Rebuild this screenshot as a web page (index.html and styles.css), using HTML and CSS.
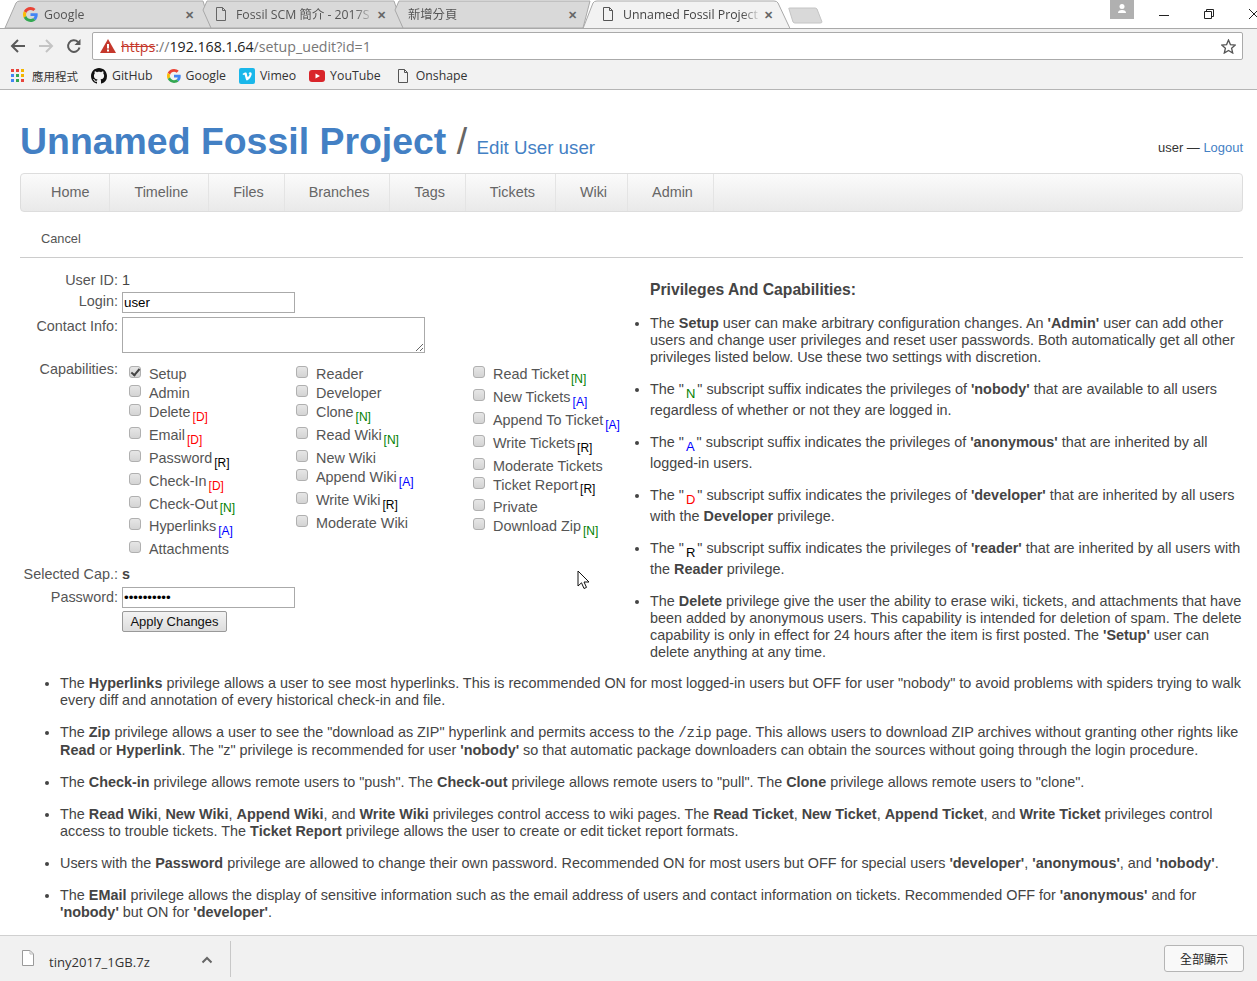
FILE: index.html

```html
<!DOCTYPE html>
<html lang="en">
<head>
    <meta charset="UTF-8">
    <title>Unnamed Fossil Project: Edit User user</title>
    <link rel="stylesheet" href="styles.css">
</head>
<body>
    <div class="browser-top">
        <div class="tab-strip">
            <svg class="tab-shapes" width="1100" height="29" viewBox="0 0 1100 29">
                <path d="M5 28 L16 3 Q17 1 20 1 H203 L211 28 Z" fill="#d9d9d9" stroke="#a9a9a9"/>
                <path d="M211 28 L203 10 L207 1 H394 L403 28 Z" fill="#d9d9d9" stroke="#a9a9a9"/>
                <path d="M403 28 L395 10 L399 1 H590 L583 28 Z" fill="#d9d9d9" stroke="#a9a9a9"/>
                <path d="M583 28.5 L593 3 Q594 1 597 1 H774 Q777 1 778 3 L790 28.5 Z" fill="#f2f2f2" stroke="#a9a9a9"/>
                <path d="M789 9 Q788 8 790 8 H815 Q816 8 817 9 L822 22 Q822 23 820 23 H795 Q794 23 793 22 Z" fill="#d9d9d9" stroke="#c4c4c4"/>
            </svg>
            <div class="tab tab-first">
                <svg class="tab-icon" width="15" height="15" viewBox="0 0 48 48">
                    <path fill="#ea4335" d="M24 9.500c3.500 0 6.700 1.200 9.200 3.600l6.900-6.900C35.900 2.400 30.500 0 24 0 14.600 0 6.500 5.400 2.600 13.200l8 6.200C12.500 13.700 17.800 9.500 24 9.500z"/>
                    <path fill="#4285f4" d="M47 24.500c0-1.600-.1-3.100-.4-4.500H24v9h12.900c-.6 3-2.200 5.400-4.700 7.100l7.700 6c4.500-4.200 7.100-10.300 7.100-17.600z"/>
                    <path fill="#fbbc05" d="M10.600 28.600c-.5-1.400-.8-3-.8-4.600s.3-3.200.8-4.600l-8-6.200C.9 16.500 0 20.100 0 24s.9 7.500 2.600 10.800l8-6.200z"/>
                    <path fill="#34a853" d="M24 48c6.500 0 11.900-2.100 15.900-5.900l-7.700-6c-2.200 1.400-4.900 2.300-8.200 2.300-6.200 0-11.500-4.200-13.400-9.900l-8 6.200C6.500 42.600 14.600 48 24 48z"/>
                </svg>
                <span class="tab-title">Google</span>
                <span class="tab-close">✕</span>
            </div>
            <div class="tab tab-second">
                <svg class="tab-icon" width="16" height="16" viewBox="0 0 16 16"><path d="M3.500 1.500H9.500L12.500 4.500V14.500H3.500Z M9.500 1.500V4.500H12.500" fill="none" stroke="#666"/></svg>
                <span class="tab-title">Fossil SCM 簡介 - 2017S</span>
                <span class="tab-close">✕</span>
            </div>
            <div class="tab tab-third">
                <span class="tab-title">新增分頁</span>
                <span class="tab-close">✕</span>
            </div>
            <div class="tab tab-active">
                <svg class="tab-icon" width="16" height="16" viewBox="0 0 16 16"><path d="M3.500 1.500H9.500L12.500 4.500V14.500H3.500Z M9.500 1.500V4.500H12.500" fill="none" stroke="#555"/></svg>
                <span class="tab-title">Unnamed Fossil Project</span>
                <span class="tab-close">✕</span>
            </div>
            <div class="window-controls">
                <div class="avatar">
                    <svg width="24" height="19" viewBox="0 0 24 19"><circle cx="12" cy="6.500" r="2.500" fill="#fff"/><path d="M8 13 Q8 10 12 10 Q16 10 16 13 Z" fill="#fff"/></svg>
                </div>
                <svg class="win-min" width="10" height="10" viewBox="0 0 10 10"><path d="M0 5.500H10" stroke="#222"/></svg>
                <svg class="win-max" width="10" height="10" viewBox="0 0 10 10"><path d="M.5 2.500H7.500V9.500H.5Z M2.500 2.500V.5H9.500V7.500H7.500" fill="none" stroke="#222"/></svg>
                <svg class="win-close" width="10" height="10" viewBox="0 0 10 10"><path d="M0 0L10 10M10 0L0 10" stroke="#222"/></svg>
            </div>
        </div>
        <div class="toolbar">
            <svg class="nav-btn" width="16" height="16" viewBox="0 0 16 16"><path d="M15 8H2M8 2L2 8L8 14" fill="none" stroke="#5a5a5a" stroke-width="2"/></svg>
            <svg class="nav-btn" width="16" height="16" viewBox="0 0 16 16"><path d="M1 8H14M8 2L14 8L8 14" fill="none" stroke="#c4c4c4" stroke-width="2"/></svg>
            <svg class="nav-btn" width="16" height="16" viewBox="0 0 16 16"><path d="M13.500 9.500A5.800 5.800 0 1 1 12 4" fill="none" stroke="#5a5a5a" stroke-width="2"/><path d="M14.500 1V7H8.500Z" fill="#5a5a5a"/></svg>
            <div class="omnibox">
                <svg class="warn-icon" width="16" height="14" viewBox="0 0 16 14"><path d="M8 0L16 14H0Z" fill="#c5382c"/><path d="M7 5H9V9.500H7ZM7 10.500H9V12.500H7Z" fill="#fff"/></svg>
                <span class="url"><span class="url-scheme">https</span><span class="url-slash">://</span><span class="url-host">192.168.1.64</span><span class="url-path">/setup_uedit?id=1</span></span>
                <svg class="star" width="15" height="15" viewBox="0 0 15 15"><path d="M7.500 1L9.400 5.600L14.300 6L10.600 9.200L11.700 14L7.500 11.400L3.300 14L4.400 9.200L.7 6L5.600 5.600Z" fill="none" stroke="#555" stroke-width="1.300"/></svg>
            </div>
        </div>
        <div class="bookmarks">
            <span class="bookmark bookmark-apps">
                <svg width="14" height="14" viewBox="0 0 14 14">
                    <rect x="0" y="0" width="3" height="3" fill="#e8453c"/><rect x="5" y="0" width="3" height="3" fill="#e8453c"/><rect x="10" y="0" width="3" height="3" fill="#f4b400"/>
                    <rect x="0" y="5" width="3" height="3" fill="#4285f4"/><rect x="5" y="5" width="3" height="3" fill="#34a853"/><rect x="10" y="5" width="3" height="3" fill="#f4b400"/>
                    <rect x="0" y="10" width="3" height="3" fill="#4285f4"/><rect x="5" y="10" width="3" height="3" fill="#34a853"/><rect x="10" y="10" width="3" height="3" fill="#e8453c"/>
                </svg>
                <span class="cjk">應用程式</span>
            </span>
            <span class="bookmark">
                <svg width="16" height="16" viewBox="0 0 16 16"><path fill="#111" d="M8 0C3.580 0 0 3.580 0 8c0 3.540 2.290 6.530 5.470 7.590.4.070.55-.17.55-.38 0-.19-.01-.82-.01-1.490-2.010.37-2.530-.49-2.690-.94-.09-.23-.48-.94-.82-1.130-.28-.15-.68-.52-.01-.53.630-.01 1.080.58 1.230.82.720 1.210 1.870.870 2.330.660.070-.520.280-.870.510-1.070-1.780-.2-3.640-.89-3.640-3.950 0-.870.310-1.590.820-2.150-.08-.2-.36-1.020.08-2.120 0 0 .67-.21 2.200.820.640-.18 1.320-.27 2-.27s1.360.09 2 .27c1.530-1.040 2.200-.82 2.200-.82.440 1.100.160 1.920.080 2.120.510.560.820 1.270.820 2.150 0 3.070-1.870 3.750-3.650 3.950.290.250.540.730.540 1.480 0 1.070-.01 1.930-.01 2.200 0 .21.150.460.550.380A8.010 8.010 0 0 0 16 8c0-4.420-3.580-8-8-8z"/></svg>
                GitHub
            </span>
            <span class="bookmark bookmark-google">
                <svg width="14" height="14" viewBox="0 0 48 48">
                    <path fill="#ea4335" d="M24 9.500c3.500 0 6.700 1.200 9.200 3.600l6.900-6.900C35.900 2.400 30.500 0 24 0 14.600 0 6.500 5.400 2.600 13.200l8 6.200C12.500 13.700 17.800 9.500 24 9.500z"/>
                    <path fill="#4285f4" d="M47 24.500c0-1.600-.1-3.100-.4-4.500H24v9h12.900c-.6 3-2.200 5.400-4.700 7.100l7.700 6c4.500-4.200 7.100-10.300 7.100-17.600z"/>
                    <path fill="#fbbc05" d="M10.600 28.600c-.5-1.400-.8-3-.8-4.600s.3-3.200.8-4.600l-8-6.200C.9 16.500 0 20.100 0 24s.9 7.500 2.600 10.800l8-6.200z"/>
                    <path fill="#34a853" d="M24 48c6.500 0 11.900-2.100 15.900-5.900l-7.700-6c-2.200 1.400-4.900 2.300-8.200 2.300-6.200 0-11.500-4.200-13.400-9.900l-8 6.200C6.500 42.600 14.600 48 24 48z"/>
                </svg>
                Google
            </span>
            <span class="bookmark">
                <svg width="16" height="16" viewBox="0 0 16 16"><rect width="16" height="16" rx="2" fill="#1ab7ea"/><path d="M3.500 6L4.200 6.900C5 6.300 5.400 6.200 5.700 7L6.900 11.300C7.400 12.600 8 12.800 8.900 12.100C10.800 10.700 12.400 8.300 12.700 6.200C13 4 10.500 3.200 9.200 5.800C10.300 5.100 10.900 6 10.300 7.200C9.700 8.300 9.200 8.900 8.900 8.900C8.500 8.900 8.300 7.800 8 6.400C7.600 4.200 6.800 3.800 3.500 6Z" fill="#fff"/></svg>
                Vimeo
            </span>
            <span class="bookmark">
                <svg width="16" height="16" viewBox="0 0 16 16"><rect y="2" width="16" height="12" rx="3" fill="#d9252a"/><path d="M6.500 5.500L11 8L6.500 10.500Z" fill="#fff"/></svg>
                YouTube
            </span>
            <span class="bookmark bookmark-last">
                <svg width="14" height="16" viewBox="0 0 14 16"><path d="M2.500 1.500H8.500L11.500 4.500V14.500H2.500Z M8.500 1.500V4.500H11.500" fill="none" stroke="#555"/></svg>
                Onshape
            </span>
        </div>
    </div>

    <div class="page">
        <div class="header">
            <div class="title">Unnamed Fossil Project <span class="title-slash">/</span> <span class="subtitle">Edit User user</span></div>
            <div class="login-status">user — <a href="#">Logout</a></div>
        </div>
        <div class="mainmenu">
            <a href="#">Home</a>
            <a href="#">Timeline</a>
            <a href="#">Files</a>
            <a href="#">Branches</a>
            <a href="#">Tags</a>
            <a href="#">Tickets</a>
            <a href="#">Wiki</a>
            <a href="#">Admin</a>
        </div>
        <div class="submenu"><a href="#">Cancel</a></div>

        <div class="content">
            <form class="edit-form">
                <table class="form-table">
                    <tr class="row-id">
                        <td class="form-label">User ID:</td>
                        <td>1</td>
                    </tr>
                    <tr class="row-login">
                        <td class="form-label">Login:</td>
                        <td><input type="text" class="text-input" value="user"></td>
                    </tr>
                    <tr class="row-info">
                        <td class="form-label">Contact Info:</td>
                        <td><textarea class="info-input"></textarea></td>
                    </tr>
                    <tr class="row-caps">
                        <td class="form-label">Capabilities:</td>
                        <td>
                            <table class="caps-table">
                                <tr>
                                    <td class="caps-col-1">
                                        <label><input type="checkbox" checked>Setup</label><br>
                                        <label><input type="checkbox">Admin</label><br>
                                        <label><input type="checkbox">Delete<sub class="inherit-dev">[D]</sub></label><br>
                                        <label><input type="checkbox">Email<sub class="inherit-dev">[D]</sub></label><br>
                                        <label><input type="checkbox">Password<sub class="inherit-reader">[R]</sub></label><br>
                                        <label><input type="checkbox">Check-In<sub class="inherit-dev">[D]</sub></label><br>
                                        <label><input type="checkbox">Check-Out<sub class="inherit-nobody">[N]</sub></label><br>
                                        <label><input type="checkbox">Hyperlinks<sub class="inherit-anon">[A]</sub></label><br>
                                        <label><input type="checkbox">Attachments</label>
                                    </td>
                                    <td class="caps-col-2">
                                        <label><input type="checkbox">Reader</label><br>
                                        <label><input type="checkbox">Developer</label><br>
                                        <label><input type="checkbox">Clone<sub class="inherit-nobody">[N]</sub></label><br>
                                        <label><input type="checkbox">Read Wiki<sub class="inherit-nobody">[N]</sub></label><br>
                                        <label><input type="checkbox">New Wiki</label><br>
                                        <label><input type="checkbox">Append Wiki<sub class="inherit-anon">[A]</sub></label><br>
                                        <label><input type="checkbox">Write Wiki<sub class="inherit-reader">[R]</sub></label><br>
                                        <label><input type="checkbox">Moderate Wiki</label>
                                    </td>
                                    <td class="caps-col-3">
                                        <label><input type="checkbox">Read Ticket<sub class="inherit-nobody">[N]</sub></label><br>
                                        <label><input type="checkbox">New Tickets<sub class="inherit-anon">[A]</sub></label><br>
                                        <label><input type="checkbox">Append To Ticket<sub class="inherit-anon">[A]</sub></label><br>
                                        <label><input type="checkbox">Write Tickets<sub class="inherit-reader">[R]</sub></label><br>
                                        <label><input type="checkbox">Moderate Tickets</label><br>
                                        <label><input type="checkbox">Ticket Report<sub class="inherit-reader">[R]</sub></label><br>
                                        <label><input type="checkbox">Private</label><br>
                                        <label><input type="checkbox">Download Zip<sub class="inherit-nobody">[N]</sub></label>
                                    </td>
                                </tr>
                            </table>
                        </td>
                    </tr>
                    <tr class="row-selected">
                        <td class="form-label">Selected Cap.:</td>
                        <td><b>s</b></td>
                    </tr>
                    <tr class="row-password">
                        <td class="form-label">Password:</td>
                        <td><input type="password" class="text-input" value="**********"></td>
                    </tr>
                    <tr>
                        <td></td>
                        <td><input type="button" class="apply-btn" value="Apply Changes"></td>
                    </tr>
                </table>
            </form>

            <h2 class="help-title">Privileges And Capabilities:</h2>
            <ul class="help-list">
                <li>The <b>Setup</b> user can make arbitrary configuration changes. An <b>'Admin'</b> user can add other users and change user privileges and reset user passwords. Both automatically get all other privileges listed below. Use these two settings with discretion.</li>
                <li>The "<sub class="legend inherit-nobody">N</sub>" subscript suffix indicates the privileges of <b>'nobody'</b> that are available to all users regardless of whether or not they are logged in.</li>
                <li>The "<sub class="legend inherit-anon">A</sub>" subscript suffix indicates the privileges of <b>'anonymous'</b> that are inherited by all logged-in users.</li>
                <li>The "<sub class="legend inherit-dev">D</sub>" subscript suffix indicates the privileges of <b>'developer'</b> that are inherited by all users with the <b>Developer</b> privilege.</li>
                <li>The "<sub class="legend inherit-reader">R</sub>" subscript suffix indicates the privileges of <b>'reader'</b> that are inherited by all users with the <b>Reader</b> privilege.</li>
                <li class="item-delete">The <b>Delete</b> privilege give the user the ability to erase wiki, tickets, and attachments that have been added by anonymous users. This capability is intended for deletion of spam. The delete capability is only in effect for 24 hours after the item is first posted. The <b>'Setup'</b> user can delete anything at any time.</li>
                <li>The <b>Hyperlinks</b> privilege allows a user to see most hyperlinks. This is recommended ON for most logged-in users but OFF for user "nobody" to avoid problems with spiders trying to walk every diff and annotation of every historical check-in and file.</li>
                <li>The <b>Zip</b> privilege allows a user to see the "download as ZIP" hyperlink and permits access to the <tt>/zip</tt> page. This allows users to download ZIP archives without granting other rights like <b>Read</b> or <b>Hyperlink</b>. The "z" privilege is recommended for user <b>'nobody'</b> so that automatic package downloaders can obtain the sources without going through the login procedure.</li>
                <li>The <b>Check-in</b> privilege allows remote users to "push". The <b>Check-out</b> privilege allows remote users to "pull". The <b>Clone</b> privilege allows remote users to "clone".</li>
                <li>The <b>Read Wiki</b>, <b>New Wiki</b>, <b>Append Wiki</b>, and <b>Write Wiki</b> privileges control access to wiki pages. The <b>Read Ticket</b>, <b>New Ticket</b>, <b>Append Ticket</b>, and <b>Write Ticket</b> privileges control access to trouble tickets. The <b>Ticket Report</b> privilege allows the user to create or edit ticket report formats.</li>
                <li>Users with the <b>Password</b> privilege are allowed to change their own password. Recommended ON for most users but OFF for special users <b>'developer'</b>, <b>'anonymous'</b>, and <b>'nobody'</b>.</li>
                <li>The <b>EMail</b> privilege allows the display of sensitive information such as the email address of users and contact information on tickets. Recommended OFF for <b>'anonymous'</b> and for <b>'nobody'</b> but ON for <b>'developer'</b>.</li>
            </ul>
        </div>
    </div>

    <div class="download-bar">
        <div class="download-item">
            <svg class="file-icon" width="14" height="18" viewBox="0 0 14 18"><path d="M1.500 1.500H9L12.500 5V16.500H1.500Z" fill="#fff" stroke="#9a9a9a"/><path d="M9 1.500V5H12.500" fill="none" stroke="#bbb"/></svg>
            <span class="file-name">tiny2017_1GB.7z</span>
            <svg class="caret" width="12" height="8" viewBox="0 0 12 8"><path d="M1.500 6.500L6 2L10.500 6.500" fill="none" stroke="#666" stroke-width="2"/></svg>
        </div>
        <button class="show-all" type="button">全部顯示</button>
    </div>

    <svg class="cursor" width="14" height="21" viewBox="0 0 14 21"><path d="M1 1V16L4.500 12.800L7 18.500L9.500 17.400L7 12H12Z" fill="#fff" stroke="#111"/></svg>
</body>
</html>
```

FILE: styles.css

```css
html, body {
    margin: 0;
    height: 981px;
    overflow: hidden;
}

body {
    position: relative;
    display: flex;
    flex-direction: column;
    background: #fff;
    font-family: "Liberation Sans", Arial, sans-serif;
    font-size: 14.4px;
    color: #444;
}

/* browser chrome */
.browser-top {
    flex: none;
    font-family: "Open Sans", "Noto Sans CJK TC", sans-serif;
    font-size: 12.3px;
    color: #333;
}

.tab-strip {
    position: relative;
    display: flex;
    height: 28px;
    border-bottom: 1px solid #a9a9a9;
}

.tab-shapes {
    position: absolute;
    left: 0;
    top: 0;
}

.tab {
    position: relative;
    display: flex;
    align-items: center;
    height: 28px;
    color: #555;
}

.tab-first { width: 172px; margin-left: 23px; }
.tab-second { width: 174px; margin-left: 18px; }
.tab-third { width: 170px; margin-left: 21px; }
.tab-active { width: 174px; margin-left: 22px; color: #444; }

.tab-icon {
    flex: none;
    margin-right: 7px;
}

.tab-first .tab-icon {
    margin-right: 6px;
}

.tab-title {
    flex: 1;
    overflow: hidden;
    white-space: nowrap;
    -webkit-mask-image: linear-gradient(to right, #000 85%, transparent);
    mask-image: linear-gradient(to right, #000 85%, transparent);
}

.tab-close {
    flex: none;
    width: 12px;
    font-size: 11px;
    font-weight: bold;
    color: #666;
    text-align: center;
}

.window-controls {
    position: absolute;
    right: 0;
    top: 0;
    display: flex;
    align-items: flex-start;
}

.avatar {
    width: 24px;
    height: 19px;
    background: #b0b0b0;
}

.win-min { margin: 10px 0 0 25px; }
.win-max { margin: 9px 0 0 35px; }
.win-close { margin: 9px -2px 0 35px; }

.toolbar {
    display: flex;
    align-items: center;
    height: 33px;
    background: #f2f2f2;
    padding: 0 14px 0 10px;
}

.nav-btn {
    flex: none;
    margin-right: 12px;
}

.omnibox {
    display: flex;
    align-items: center;
    flex: 1;
    height: 26px;
    margin: 1px 0 0 -2px;
    padding: 0 6px 0 7px;
    background: #fff;
    border: 1px solid #aaa;
    border-radius: 2px;
    font-size: 14.2px;
}

.warn-icon {
    flex: none;
    margin-right: 5px;
}

.url {
    flex: 1;
    white-space: nowrap;
}

.url-scheme {
    color: #c5382c;
    text-decoration: line-through;
}

.url-slash,
.url-path {
    color: #777;
}

.url-host {
    color: #222;
}

.bookmarks {
    display: flex;
    align-items: center;
    gap: 13px;
    height: 27px;
    padding: 0 0 0 11px;
    background: #f2f2f2;
    border-bottom: 1px solid #b5b5b5;
    white-space: nowrap;
}

.bookmark {
    display: flex;
    align-items: center;
    gap: 5px;
}

.bookmark-apps {
    gap: 7px;
}

.bookmark-google {
    margin-left: 1px;
}

.bookmark-last {
    margin-left: 2px;
    gap: 6px;
}

.cjk {
    font-family: "Noto Sans CJK TC", sans-serif;
    font-size: 11.5px;
}

/* page */
.page {
    flex: 1;
    min-height: 0;
    overflow: hidden;
    padding: 0 14px 0 20px;
}

.header {
    display: flex;
    justify-content: space-between;
    align-items: flex-end;
    height: 80px;
    margin-bottom: 3px;
}

.title {
    font-size: 37.44px;
    font-weight: bold;
    line-height: 44px;
    color: #4380c4;
    white-space: nowrap;
}

.title-slash {
    font-weight: normal;
    color: #666;
}

.subtitle {
    margin-left: -1px;
    font-size: 18.72px;
    font-weight: normal;
    color: #4380c4;
}

.login-status {
    padding-bottom: 15px;
    font-size: 12.96px;
    color: #333;
}

.login-status a {
    color: #4380c4;
    text-decoration: none;
}

.mainmenu {
    display: flex;
    height: 37px;
    padding-left: 6px;
    background: linear-gradient(#fbfbfb, #e9e9e9);
    border: 1px solid #ddd;
    border-radius: 4px;
}

.mainmenu a {
    padding: 0 20px 0 24px;
    border-right: 1px solid #e4e4e4;
    line-height: 37px;
    color: #666;
    text-decoration: none;
}

.submenu {
    height: 45px;
    border-bottom: 1px solid #ccc;
    font-size: 12.8px;
    line-height: 54px;
    padding-left: 21px;
}

.submenu a {
    color: #555;
    text-decoration: none;
}

.content {
    padding-top: 13px;
}

.edit-form {
    float: left;
    width: 630px;
    padding-bottom: 29px;
}

.form-table,
.caps-table {
    border-collapse: collapse;
}

.form-table td {
    padding: 0;
    vertical-align: top;
}

.form-table .form-label {
    width: 98px;
    padding-right: 4px;
    text-align: right;
    white-space: nowrap;
    color: #555;
}

.row-id td { height: 21px; line-height: 19px; }
.row-login td { height: 25px; line-height: 19px; }
.row-info td { height: 43px; line-height: 19px; }
.row-caps .form-label { line-height: 19px; }
.row-selected td { height: 23px; line-height: 21px; }
.row-password td { height: 24px; line-height: 21px; }

.text-input {
    display: block;
    box-sizing: border-box;
    width: 173px;
    height: 21px;
    margin: 0;
    padding: 1px;
    border: 1px solid #aaa;
    font-family: "Liberation Sans", Arial, sans-serif;
    font-size: 13.33px;
    color: #000;
}

.info-input {
    display: block;
    box-sizing: border-box;
    width: 303px;
    height: 36px;
    margin: 0;
    border: 1px solid #aaa;
}

.caps-table {
    margin: 5px 0 5px;
}

.caps-table td {
    padding: 0;
    line-height: 19px;
    white-space: nowrap;
}

.form-table .caps-col-1 { width: 167px; }
.form-table .caps-col-2 { width: 177px; }

.caps-table label {
    color: #555;
}

.caps-table input {
    appearance: none;
    position: relative;
    box-sizing: border-box;
    width: 12px;
    height: 12px;
    margin: 0 8px 0 7px;
    vertical-align: 1px;
    background: linear-gradient(#e6e6e6, #d4d4d4);
    border: 1px solid #b0b0b0;
    border-radius: 3px;
}

.caps-table input:checked::after {
    content: "";
    position: absolute;
    left: 3px;
    top: 0;
    width: 3px;
    height: 7px;
    border: solid #444;
    border-width: 0 2px 2px 0;
    transform: rotate(40deg);
}

sub {
    margin-left: 2px;
    font-size: 12px;
    line-height: 17px;
}

sub.legend {
    margin: 0 2px;
    font-size: 13px;
    line-height: 16px;
}

.inherit-nobody { color: #008000; }
.inherit-anon { color: #0000ff; }
.inherit-dev { color: #ff0000; }
.inherit-reader { color: #000; }

.apply-btn {
    box-sizing: border-box;
    width: 105px;
    height: 21px;
    padding: 0;
    background: linear-gradient(#f3f3f3, #dcdcdc);
    border: 1px solid #999;
    border-radius: 2px;
    font-family: "Liberation Sans", Arial, sans-serif;
    font-size: 13px;
    color: #111;
}

.help-title {
    margin: 0;
    padding-top: 10px;
    font-size: 15.7px;
    line-height: 18px;
}

.help-list {
    margin: 16px 0 0;
    padding-left: 40px;
    line-height: 17px;
}

.help-list li {
    margin-bottom: 15px;
}

.help-list .item-delete {
    margin-bottom: 14px;
}

.help-list tt {
    font-family: "Liberation Mono", monospace;
    font-size: 14px;
}

/* download shelf */
.download-bar {
    flex: none;
    display: flex;
    justify-content: space-between;
    align-items: center;
    box-sizing: border-box;
    height: 46px;
    padding: 0 13px 0 21px;
    background: #f1f1f1;
    border-top: 1px solid #d0d0d0;
    font-family: "Open Sans", sans-serif;
    font-size: 13.1px;
    color: #333;
}

.download-item {
    display: flex;
    align-items: center;
    width: 209px;
    height: 36px;
    border-right: 1px solid #c8c8c8;
}

.file-icon {
    flex: none;
    margin: -2px 14px 0 0;
}

.file-name {
    flex: 1;
    padding-top: 6px;
}

.caret {
    flex: none;
    margin: 3px 17px 0 0;
}

.show-all {
    box-sizing: border-box;
    width: 80px;
    height: 27px;
    padding: 0;
    background: #f9f9f9;
    border: 1px solid #b5b5b5;
    border-radius: 3px;
    font-family: "Noto Sans CJK TC", sans-serif;
    font-size: 12px;
    color: #222;
}

.cursor {
    position: absolute;
    left: 577px;
    top: 570px;
}
```
